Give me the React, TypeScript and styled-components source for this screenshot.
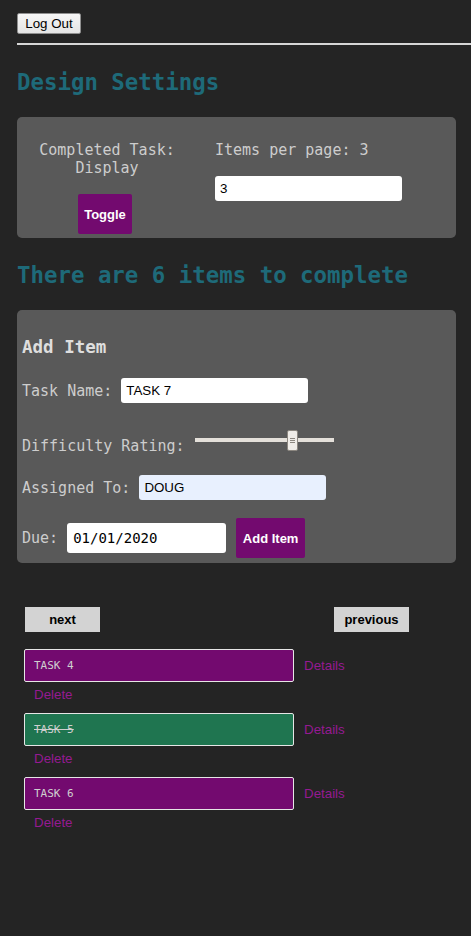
import React from 'react';
import styled, { createGlobalStyle } from 'styled-components';

const GlobalStyle = createGlobalStyle`
  html, body {
    margin: 0;
    padding: 0;
    background-color: #242424;
  }
  body {
    font-family: "DejaVu Sans Mono", monospace;
    font-size: 15px;
    color: #cdcdcd;
    min-height: 936px;
  }
`

const Page = styled.div`
  padding: 13px 0 40px 17px;
`

const LogOutButton = styled.button`
  display: block;
  width: 64px;
  height: 21px;
  padding: 0;
  font-family: "Liberation Sans", Arial, sans-serif;
  font-size: 13.33px;
  color: #000;
  background: linear-gradient(#f6f6f6, #e4e4e4);
  border: 1px solid #8f8f8f;
  border-radius: 2px;
`

const Rule = styled.hr`
  margin: 9px 0 0;
  border: none;
  height: 2px;
  background-color: #d6d6d6;
`

const Title = styled.h2`
  margin: 24px 0 22px;
  font-size: 22.4px;
  line-height: 26px;
  font-weight: bold;
  color: #1e6a79;
`

const Panel = styled.div`
  margin-right: 15px;
  background-color: #595959;
  border-radius: 5px;
`

const SettingsPanel = styled(Panel)`
  display: flex;
  padding: 24px 0 4px 5px;
`

const ToggleColumn = styled.div`
  width: 170px;
  display: flex;
  flex-direction: column;
  align-items: center;
  text-align: center;
  line-height: 18px;
`

const PerPageColumn = styled.div`
  margin-left: 23px;
  line-height: 18px;
`

const PurpleButton = styled.button<{ $width: number }>`
  width: ${p => p.$width}px;
  height: 40px;
  padding: 0;
  border: none;
  border-radius: 2px;
  background-color: #730a6f;
  color: #fff;
  font-family: "Liberation Sans", Arial, sans-serif;
  font-size: 13px;
  font-weight: bold;
`

const ToggleButton = styled(PurpleButton)`
  margin: 17px 4px 0 0;
`

const TextInput = styled.input<{ $bg?: string }>`
  box-sizing: border-box;
  width: 187px;
  height: 25px;
  padding: 0 5px;
  border: none;
  border-radius: 3px;
  outline: none;
  background-color: ${p => p.$bg || '#fff'};
  color: #000;
  font-family: "Liberation Sans", Arial, sans-serif;
  font-size: 13.33px;
`

const PerPageInput = styled(TextInput)`
  margin-top: 17px;
`

const DateInput = styled.input`
  box-sizing: border-box;
  width: 159px;
  height: 30px;
  padding: 0 6px;
  border: none;
  border-radius: 3px;
  outline: none;
  background-color: #fff;
  color: #000;
  font-family: "DejaVu Sans Mono", monospace;
  font-size: 14px;
`

const FormPanel = styled(Panel)`
  padding: 0 0 5px 5px;
`

const FormHeading = styled.h3`
  margin: 0;
  padding-top: 27px;
  font-size: 17.5px;
  line-height: 21px;
  font-weight: bold;
  color: #dedede;
`

const FormRow = styled.div<{ $top: number; $align?: string }>`
  display: flex;
  align-items: ${p => p.$align || 'center'};
  gap: 9px;
  margin-top: ${p => p.$top}px;
  line-height: 18px;
`

const Slider = styled.input`
  -webkit-appearance: none;
  appearance: none;
  width: 139px;
  height: 20px;
  margin: 0 0 5px 1px;
  background: transparent;

  &::-webkit-slider-runnable-track {
    height: 4px;
    background-color: #e4e0da;
  }
  &::-webkit-slider-thumb {
    -webkit-appearance: none;
    box-sizing: border-box;
    width: 11px;
    height: 21px;
    margin-top: -8.5px;
    border: 1px solid #8c8780;
    border-radius: 2px;
    background:
      linear-gradient(#8c8780, #8c8780) center 7px / 5px 1px no-repeat,
      linear-gradient(#8c8780, #8c8780) center 9px / 5px 1px no-repeat,
      linear-gradient(#8c8780, #8c8780) center 11px / 5px 1px no-repeat,
      #efece8;
  }
`

const DueRow = styled(FormRow)`
  gap: 0;
  & > input {
    margin-left: 9px;
  }
  & > button {
    margin-left: 10px;
  }
`

const Pager = styled.div`
  display: flex;
  justify-content: space-between;
  width: 384px;
  margin: 44px 0 17px 8px;
`

const PagerButton = styled.button`
  width: 75px;
  height: 25px;
  padding: 0;
  border: none;
  background-color: #d3d3d3;
  color: #000;
  font-family: "Liberation Sans", Arial, sans-serif;
  font-size: 13px;
  font-weight: bold;
`

const TaskItem = styled.div`
  margin: 0 0 10.5px 7px;
`

const TaskRow = styled.div`
  display: flex;
  align-items: center;
  gap: 10px;
`

const TaskBox = styled.div<{ $done: boolean }>`
  box-sizing: border-box;
  width: 270px;
  height: 33px;
  padding-left: 9px;
  display: flex;
  align-items: center;
  border: 1px solid #e6e6e6;
  border-radius: 2px;
  background-color: ${p => (p.$done ? '#1f7550' : '#730a6f')};
  color: #cfcfcf;
  font-size: 11px;
  text-decoration: ${p => (p.$done ? 'line-through' : 'none')};
`

const TaskLink = styled.a`
  display: block;
  color: #951a92;
  font-family: "Liberation Sans", Arial, sans-serif;
  font-size: 13.33px;
  line-height: 16px;
  text-decoration: none;
`

const DeleteLink = styled(TaskLink)`
  margin: 4.5px 0 0 10px;
`

const tasks = [
  { id: 4, name: 'TASK 4', done: false },
  { id: 5, name: 'TASK 5', done: true },
  { id: 6, name: 'TASK 6', done: false },
];

export default function App() {
  return (
    <>
      <GlobalStyle />
      <Page>
        <LogOutButton>Log Out</LogOutButton>
        <Rule />
        <Title>Design Settings</Title>
        <SettingsPanel>
          <ToggleColumn>
            <div>Completed Task:</div>
            <div>Display</div>
            <ToggleButton $width={54}>Toggle</ToggleButton>
          </ToggleColumn>
          <PerPageColumn>
            <div>Items per page: 3</div>
            <PerPageInput defaultValue="3" />
          </PerPageColumn>
        </SettingsPanel>
        <Title>There are 6 items to complete</Title>
        <FormPanel>
          <FormHeading>Add Item</FormHeading>
          <FormRow $top={20}>
            <span>Task Name:</span>
            <TextInput defaultValue="TASK 7" />
          </FormRow>
          <FormRow $top={27} $align="flex-end">
            <span>Difficulty Rating:</span>
            <Slider type="range" min={0} max={100} defaultValue={72} />
          </FormRow>
          <FormRow $top={20}>
            <span>Assigned To:</span>
            <TextInput defaultValue="DOUG" $bg="#e8f0fe" />
          </FormRow>
          <DueRow $top={18}>
            <span>Due:</span>
            <DateInput defaultValue="01/01/2020" />
            <PurpleButton $width={69}>Add Item</PurpleButton>
          </DueRow>
        </FormPanel>
        <Pager>
          <PagerButton>next</PagerButton>
          <PagerButton>previous</PagerButton>
        </Pager>
        {tasks.map(t => (
          <TaskItem key={t.id}>
            <TaskRow>
              <TaskBox $done={t.done}>{t.name}</TaskBox>
              <TaskLink href="#">Details</TaskLink>
            </TaskRow>
            <DeleteLink href="#">Delete</DeleteLink>
          </TaskItem>
        ))}
      </Page>
    </>
  );
}
